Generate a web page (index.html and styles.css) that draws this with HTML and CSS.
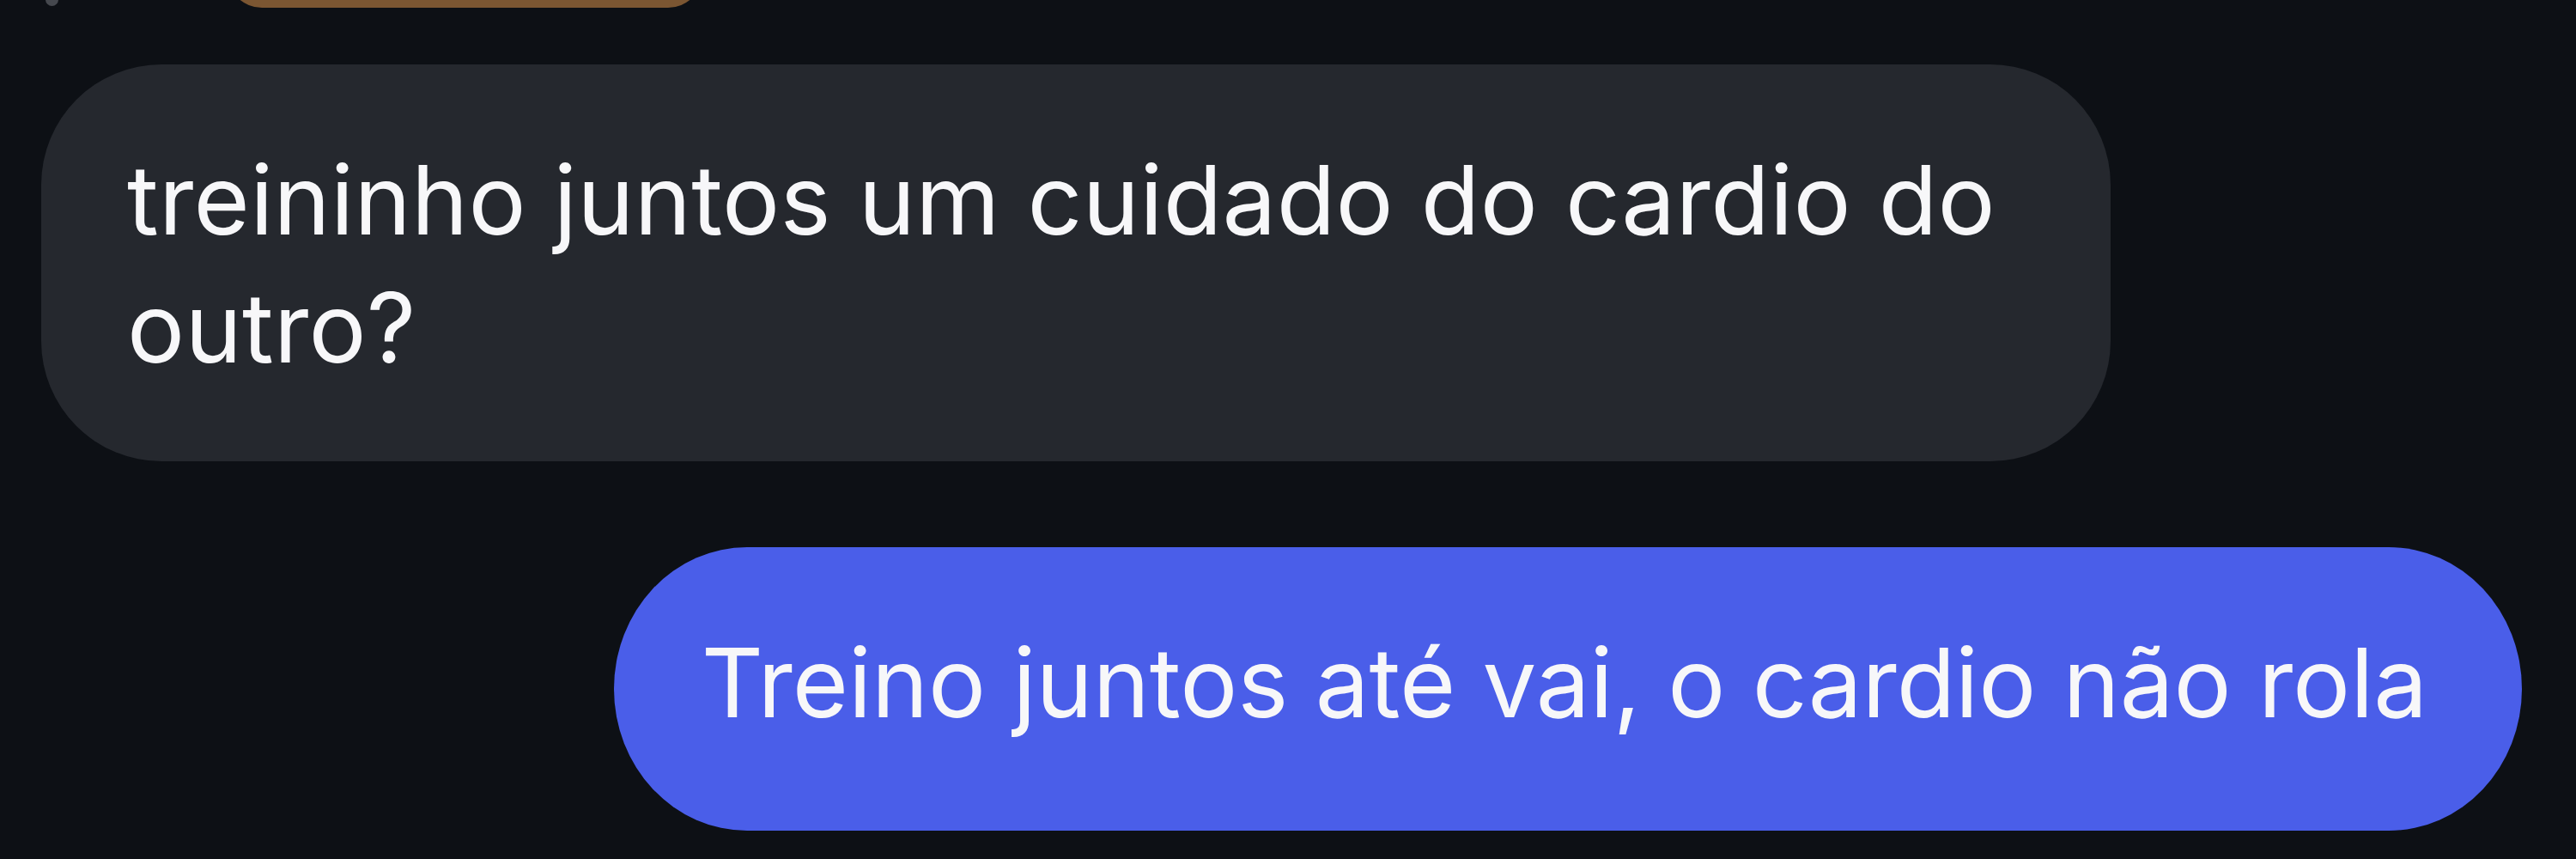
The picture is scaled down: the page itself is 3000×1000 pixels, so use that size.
FILE: index.html
```html
<!DOCTYPE html>
<html lang="pt-BR">
<head>
    <meta charset="UTF-8">
    <meta name="viewport" content="width=device-width, initial-scale=1.0">
    <title>Conversa</title>
    <link rel="stylesheet" href="styles.css">
</head>
<body>

    <div id="chat">
        <div class="top-row">
            <div class="dot"></div>
            <div class="media"></div>
        </div>

        <div class="message incoming">
            <div class="bubble">treininho juntos um cuidado do cardio do outro?</div>
        </div>

        <div class="message outgoing">
            <div class="bubble">Treino juntos até vai, o cardio não rola</div>
        </div>
    </div>

</body>
</html>
```

FILE: styles.css
```css
body {
    font-family: Inter, 'Noto Sans', sans-serif;
    background-color: #0d1015;
    margin: 0;
    height: 100vh;
    overflow: hidden;
}

#chat {
    display: flex;
    flex-direction: column;
}

.top-row {
    display: flex;
    align-items: flex-end;
    height: 9px;
    overflow: hidden;
}

.dot {
    width: 15px;
    height: 15px;
    margin-left: 53px;
    margin-bottom: 2px;
    border-radius: 50%;
    background-color: #45484e;
}

.media {
    width: 553px;
    height: 80px;
    margin-left: 197px;
    border-radius: 40px;
    background-color: #7b5632;
}

.message {
    display: flex;
}

.message.incoming {
    margin-top: 66px;
    padding-left: 48px;
}

.message.outgoing {
    justify-content: flex-end;
    margin-top: 100px;
    padding-right: 63px;
}

.bubble {
    color: #f7f7f9;
    font-size: 112px;
    line-height: 149px;
    letter-spacing: 0.3px;
}

.incoming .bubble {
    box-sizing: border-box;
    width: 2410px;
    padding: 83px 100px 81px 100px;
    border-radius: 140px;
    background-color: #25282e;
}

.outgoing .bubble {
    padding: 83px 110px 98px 102px;
    border-radius: 155px / 165px;
    background-color: #4a5ee9;
    letter-spacing: -0.1px;
    white-space: nowrap;
}
```
